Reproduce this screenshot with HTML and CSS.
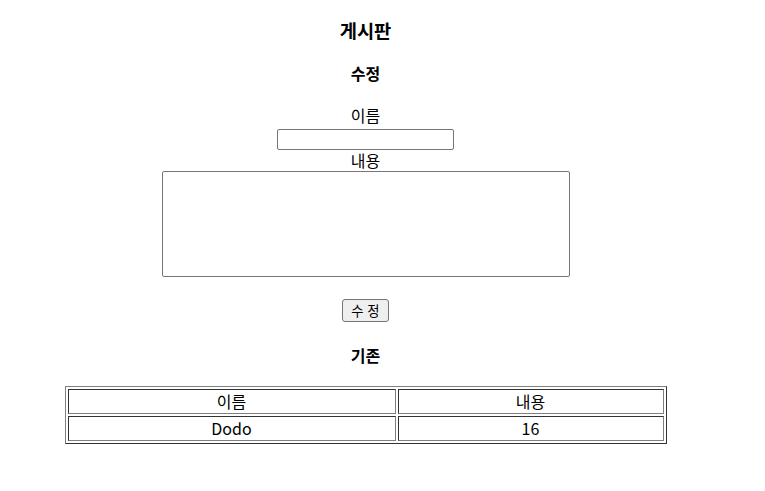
FILE: index.html
```html
<!DOCTYPE html>
<html lang="ko">
<head>
<meta charset="utf-8">
<title>게시판</title>
<link rel="stylesheet" href="styles.css">
</head>
<body>
<div class="page">
  <h3 class="title">게시판</h3>
  <h4 class="section">수정</h4>
  <form class="form">
    <label class="label label-name" for="name">이름</label>
    <input class="name-input" id="name" type="text">
    <label class="label" for="content">내용</label>
    <textarea class="content-input" id="content"></textarea>
    <button class="submit" type="button">수 정</button>
  </form>
  <h4 class="section section-old">기존</h4>
  <table class="board">
    <colgroup><col class="col-name"><col class="col-content"></colgroup>
    <tr><td>이름</td><td>내용</td></tr>
    <tr><td>Dodo</td><td>16</td></tr>
  </table>
</div>
</body>
</html>
```

FILE: styles.css
```css
html, body {
  margin: 0;
  padding: 0;
  background: #ffffff;
}
body {
  font-family: "Noto Sans CJK KR", "Noto Sans", sans-serif;
  color: #000;
  font-size: 16px;
}
.page {
  width: 715px;
  margin: 0 8px;
  display: flex;
  flex-direction: column;
  align-items: center;
  text-align: center;
}
.title {
  margin: 17px 0 0;
  font-size: 18.72px;
  line-height: 25px;
  font-weight: bold;
}
.section {
  margin: 21px 0 0;
  font-size: 16px;
  line-height: 21px;
  font-weight: bold;
}
.section-old {
  margin-top: 23px;
}
.form {
  margin: 21px 0 0;
  display: flex;
  flex-direction: column;
  align-items: center;
}
.label {
  display: block;
  line-height: 21px;
  height: 21px;
}
.label-name {
  height: 24px;
  line-height: 21px;
}
.name-input {
  box-sizing: border-box;
  width: 177px;
  height: 21px;
  margin: 0;
  border: 1px solid #767676;
  border-radius: 2px;
  padding: 1px 2px;
  font-size: 13.33px;
  background: #fff;
}
.content-input {
  box-sizing: border-box;
  width: 408px;
  height: 106px;
  margin: 0;
  border: 1px solid #767676;
  border-radius: 2px;
  padding: 2px;
  resize: none;
  font-size: 13.33px;
  background: #fff;
}
.submit {
  box-sizing: border-box;
  margin: 22px 0 0;
  width: 47px;
  height: 23px;
  padding: 0 6px;
  background: #efefef;
  border: 1px solid #767676;
  border-radius: 3px;
  font-family: "Noto Sans CJK KR", "Noto Sans", sans-serif;
  font-size: 13.33px;
  line-height: 19px;
  color: #000;
}
.board {
  margin-top: 20px;
  width: 600px;
  table-layout: fixed;
  border-collapse: separate;
  border-spacing: 2px;
  border-style: solid;
  border-width: 1px;
  border-color: #808080 #333333 #333333 #808080;
}
.col-name {
  width: 328px;
}
.col-content {
  width: 266px;
}
.board td {
  box-sizing: border-box;
  height: 25px;
  padding: 1px;
  line-height: 21px;
  text-align: center;
  border-style: solid;
  border-width: 1px;
  border-color: #333333 #808080 #808080 #333333;
}
```
